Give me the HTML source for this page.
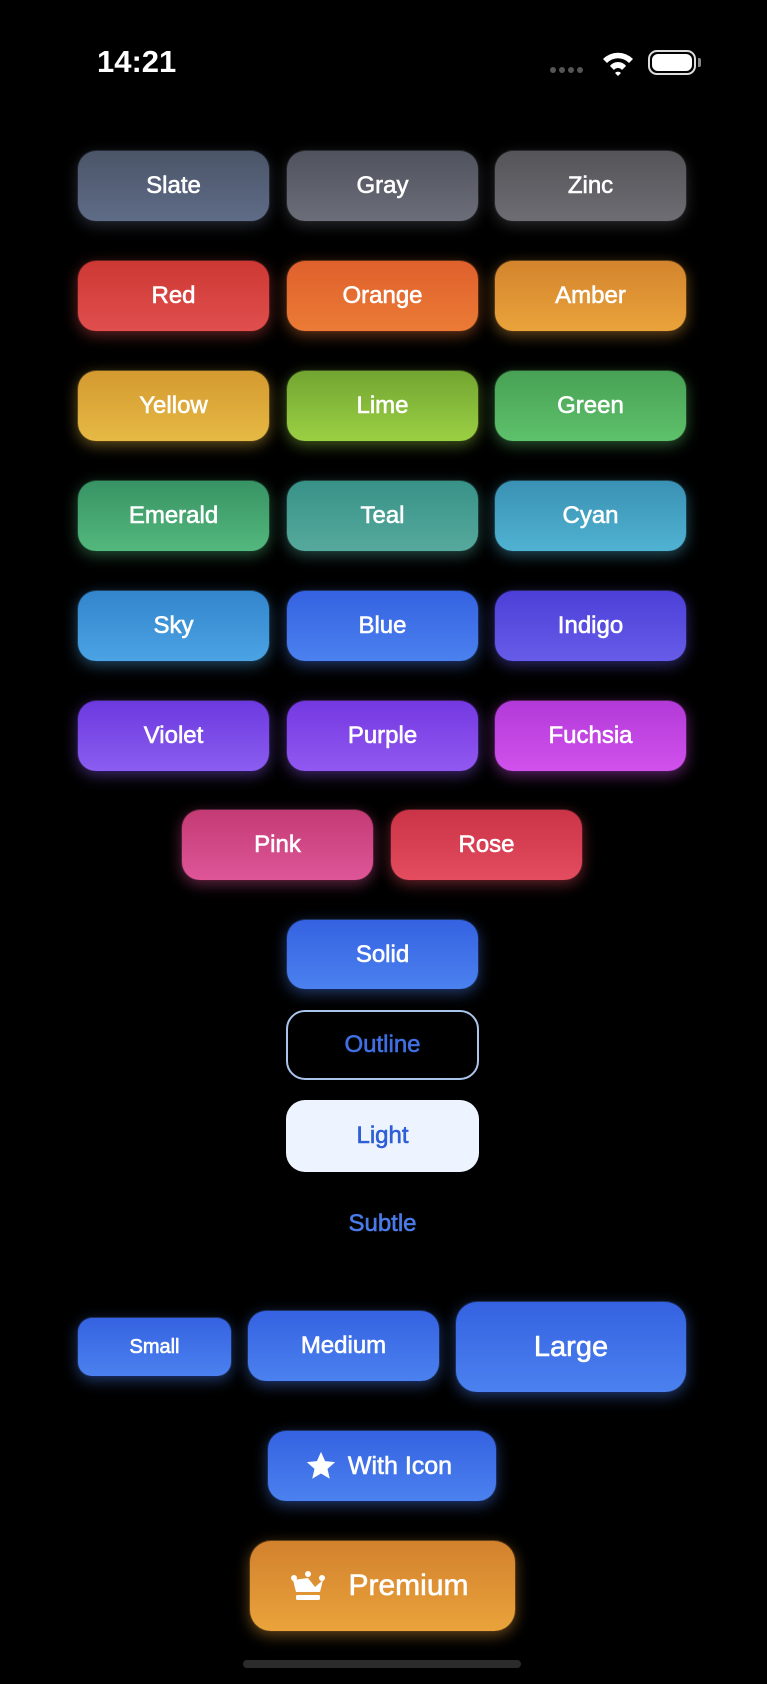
<!DOCTYPE html>
<html><head><meta charset="utf-8"><style>
html,body{margin:0;padding:0;background:#000;}
body{width:767px;height:1684px;position:relative;overflow:hidden;font-family:"Liberation Sans",sans-serif;}
.b{position:absolute;border-radius:19px;color:#fff;font-size:24px;-webkit-text-stroke:0.6px currentColor;display:flex;align-items:center;justify-content:center;box-sizing:border-box;border:1.5px solid rgba(0,0,0,.6);}
</style></head><body>
<div style="position:absolute;left:97px;top:44px;color:#fff;font-weight:bold;font-size:31px;">14:21</div>
<div style="position:absolute;left:550px;top:67px;width:34px;height:6px;display:flex;gap:3px">
<span style="width:6px;height:6px;border-radius:3px;background:#555"></span><span style="width:6px;height:6px;border-radius:3px;background:#555"></span><span style="width:6px;height:6px;border-radius:3px;background:#555"></span><span style="width:6px;height:6px;border-radius:3px;background:#555"></span></div>
<svg style="position:absolute;left:601px;top:50px" width="34" height="26" viewBox="0 0 34 26"><path d="M2 9 A21 21 0 0 1 32 9 L28 13 A15 15 0 0 0 6 13Z M9 16 A10 10 0 0 1 25 16 L21 20 A5 5 0 0 0 13 20Z M17 26 L14 23 A4 4 0 0 1 20 23Z" fill="#fff"/></svg>
<div style="position:absolute;left:648px;top:50px;width:48px;height:25px;border:2px solid #ddd;border-radius:9px;box-sizing:border-box;padding:2px"><div style="background:#fff;height:100%;border-radius:6px"></div></div>
<div style="position:absolute;left:698px;top:58px;width:3px;height:9px;background:#888;border-radius:0 2px 2px 0"></div>

<div class="b" style="left:77px;top:150px;width:193px;height:72px;background:linear-gradient(#4b5568,#5f6c87);box-shadow:0 4px 14px rgba(95,108,135,.35)">Slate</div>
<div class="b" style="left:286px;top:150px;width:193px;height:72px;background:linear-gradient(#50535d,#6b6e79);box-shadow:0 4px 14px rgba(107,110,121,.35)">Gray</div>
<div class="b" style="left:494px;top:150px;width:193px;height:72px;background:linear-gradient(#545459,#6d6d73);box-shadow:0 4px 14px rgba(109,109,115,.35)">Zinc</div>

<div class="b" style="left:77px;top:260px;width:193px;height:72px;background:linear-gradient(#cd3833,#e04f4e);box-shadow:0 4px 14px rgba(224,79,78,.4)">Red</div>
<div class="b" style="left:286px;top:260px;width:193px;height:72px;background:linear-gradient(#df602c,#eb7b36);box-shadow:0 4px 14px rgba(235,123,54,.4)">Orange</div>
<div class="b" style="left:494px;top:260px;width:193px;height:72px;background:linear-gradient(#d3842d,#eaa33b);box-shadow:0 4px 14px rgba(234,163,59,.4)">Amber</div>

<div class="b" style="left:77px;top:370px;width:193px;height:72px;background:linear-gradient(#d49a30,#e6b944);box-shadow:0 4px 14px rgba(230,185,68,.4)">Yellow</div>
<div class="b" style="left:286px;top:370px;width:193px;height:72px;background:linear-gradient(#72a531,#9bd044);box-shadow:0 4px 14px rgba(155,208,68,.4)">Lime</div>
<div class="b" style="left:494px;top:370px;width:193px;height:72px;background:linear-gradient(#48a155,#5ec16b);box-shadow:0 4px 14px rgba(94,193,107,.4)">Green</div>

<div class="b" style="left:77px;top:480px;width:193px;height:72px;background:linear-gradient(#389364,#53b87d);box-shadow:0 4px 14px rgba(83,184,125,.4)">Emerald</div>
<div class="b" style="left:286px;top:480px;width:193px;height:72px;background:linear-gradient(#389288,#56a99c);box-shadow:0 4px 14px rgba(86,169,156,.4)">Teal</div>
<div class="b" style="left:494px;top:480px;width:193px;height:72px;background:linear-gradient(#3a91b3,#50b2d2);box-shadow:0 4px 14px rgba(80,178,210,.4)">Cyan</div>

<div class="b" style="left:77px;top:590px;width:193px;height:72px;background:linear-gradient(#3385cc,#4ba3e4);box-shadow:0 4px 14px rgba(75,163,228,.4)">Sky</div>
<div class="b" style="left:286px;top:590px;width:193px;height:72px;background:linear-gradient(#3562e1,#4b81ef);box-shadow:0 4px 14px rgba(75,129,239,.4)">Blue</div>
<div class="b" style="left:494px;top:590px;width:193px;height:72px;background:linear-gradient(#4c3fd7,#675ce9);box-shadow:0 4px 14px rgba(103,92,233,.4)">Indigo</div>

<div class="b" style="left:77px;top:700px;width:193px;height:72px;background:linear-gradient(#6c39df,#8b5df0);box-shadow:0 4px 14px rgba(139,93,240,.4)">Violet</div>
<div class="b" style="left:286px;top:700px;width:193px;height:72px;background:linear-gradient(#7438e1,#9159f0);box-shadow:0 4px 14px rgba(145,89,240,.4)">Purple</div>
<div class="b" style="left:494px;top:700px;width:193px;height:72px;background:linear-gradient(#b23ad8,#d151ec);box-shadow:0 4px 14px rgba(209,81,236,.4)">Fuchsia</div>

<div class="b" style="left:181px;top:809px;width:193px;height:72px;background:linear-gradient(#c33a74,#de5698);box-shadow:0 4px 14px rgba(222,86,152,.4)">Pink</div>
<div class="b" style="left:390px;top:809px;width:193px;height:72px;background:linear-gradient(#cb3347,#e34d5f);box-shadow:0 4px 14px rgba(227,77,95,.4)">Rose</div>

<div class="b" style="left:286px;top:919px;width:193px;height:71px;background:linear-gradient(#3562e1,#4b81ef);box-shadow:0 4px 14px rgba(75,129,239,.4)">Solid</div>
<div class="b" style="left:286px;top:1010px;width:193px;height:70px;background:#000;border:2px solid #a9c5ec;color:#3f6fe1">Outline</div>
<div class="b" style="left:286px;top:1100px;width:193px;height:72px;background:#eef4ff;color:#2f5fd6;border:none">Light</div>
<div style="position:absolute;left:286px;top:1210px;width:193px;text-align:center;color:#4a7be8;font-size:24px;-webkit-text-stroke:0.6px #4a7be8;">Subtle</div>

<div class="b" style="left:77px;top:1317px;width:155px;height:60px;font-size:20px;border-radius:15px;background:linear-gradient(#3562e1,#4b81ef);box-shadow:0 4px 14px rgba(75,129,239,.4)">Small</div>
<div class="b" style="left:247px;top:1310px;width:193px;height:72px;background:linear-gradient(#3562e1,#4b81ef);box-shadow:0 4px 14px rgba(75,129,239,.4)">Medium</div>
<div class="b" style="left:455px;top:1301px;width:232px;height:92px;font-size:29px;border-radius:22px;background:linear-gradient(#3562e1,#4b81ef);box-shadow:0 4px 14px rgba(75,129,239,.4)">Large</div>

<div class="b" style="left:267px;top:1430px;width:230px;height:72px;font-size:25px;background:linear-gradient(#3562e1,#4b81ef);box-shadow:0 4px 14px rgba(75,129,239,.4)"><svg width="34" height="34" viewBox="0 0 24 24" style="margin-right:10px;margin-left:-8px"><path d="M12 2 L14.9 8.6 L22 9.3 L16.6 14 L18.2 21 L12 17.3 L5.8 21 L7.4 14 L2 9.3 L9.1 8.6Z" fill="#fff"/></svg>With Icon</div>

<div class="b" style="left:249px;top:1540px;width:267px;height:92px;font-size:30px;border-radius:22px;background:linear-gradient(#d2812d,#eaa33b);box-shadow:0 4px 14px rgba(234,163,59,.4)"><svg width="36" height="34" viewBox="0 0 36 34" style="margin-right:22px;margin-left:-6px"><circle cx="18" cy="5" r="3" fill="#fff"/><circle cx="4" cy="9" r="3" fill="#fff"/><circle cx="32" cy="9" r="3" fill="#fff"/><path d="M3 11 L18 9 L33 11 L30 23 L6 23Z M18 9 L11 18 L3 11 M18 9 L25 18 L33 11" fill="#fff"/><rect x="6" y="26" width="24" height="5" rx="1.5" fill="#fff"/></svg>Premium</div>

<div style="position:absolute;left:243px;top:1660px;width:278px;height:8px;border-radius:4px;background:#2b2b2b"></div>
</body></html>
